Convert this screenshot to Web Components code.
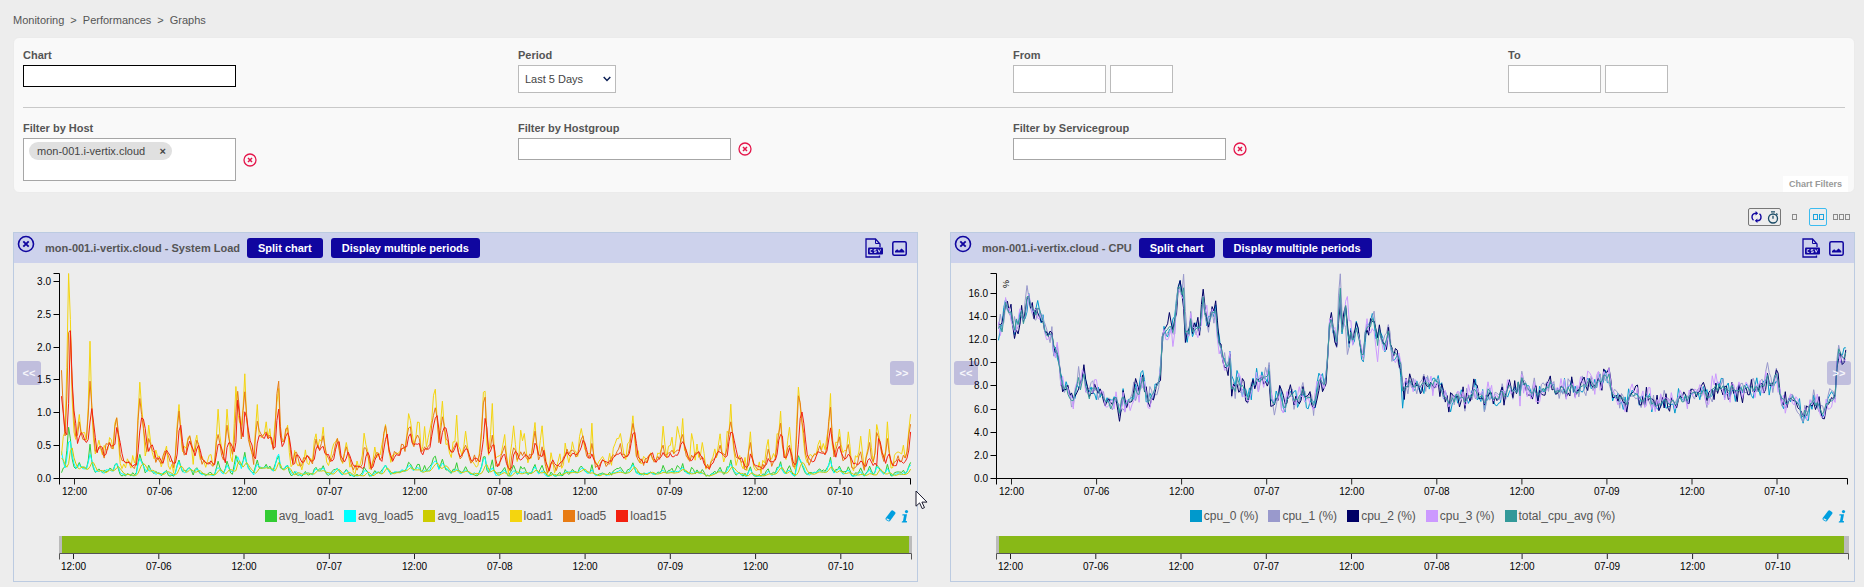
<!DOCTYPE html>
<html lang="en">
<head>
<meta charset="utf-8">
<title>Monitoring - Performances - Graphs</title>
<style>
html, body { margin: 0; background: #ededed; }
body { font: 11px/14px "Liberation Sans", Arial, sans-serif; color: #555; }
</style>
</head>
<body>
<graphs-page></graphs-page>

<script>
const BASE = `<style>
*, *::before { box-sizing: border-box; }
svg { display: block; flex: none; }
button { font: inherit; color: inherit; background: none; border: 0; padding: 0; margin: 0; cursor: pointer; }
input, select { font: inherit; color: #444; margin: 0; border-radius: 0; background: #fff; border: 1px solid #bbb; outline: 0; padding: 0 4px; display: block; }
</style>`;

class Base extends HTMLElement {
  connectedCallback() {
    if (this.shadowRoot) return;
    this.attachShadow({ mode: 'open' }).innerHTML = BASE + this.view();
    this.ready();
  }
  view() { return ''; }
  ready() {}
}

customElements.define('bread-crumb', class extends Base {
  view() {
    const items = this.getAttribute('path').split('/');
    return `<style>
:host { display: block; }
nav { display: flex; gap: 6px; }
a { color: inherit; text-decoration: none; }
</style><nav aria-label="Breadcrumb">${items.map(t => `<a href="#">${t}</a>`).join('<span>&gt;</span>')}</nav>`;
  }
});

/* Labelled filter field: kind is text, group, period, range or host */
customElements.define('filter-field', class extends Base {
  view() {
    const label = this.getAttribute('label');
    const kind = this.getAttribute('kind');
    const clear = `<button class="clear" aria-label="Clear ${label}"><svg width="14" height="14" viewBox="0 0 14 14" fill="none" stroke="#e4164b"><circle cx="7" cy="7" r="6" stroke-width="1.3"/><path d="M5 5l4 4M9 5L5 9" stroke-width="1.5"/></svg></button>`;
    const body = {
      text: `<input class="wide focus" id="f" type="text">`,
      group: `<input class="wide" id="f" type="text">${clear}`,
      period: `<span class="select"><select id="f"><option>Last 5 Days</option></select><svg width="8" height="6" viewBox="0 0 8 6" fill="none" stroke="#0b1f55" stroke-width="1.5"><path d="M.7 1L4 4.4L7.3 1"/></svg></span>`,
      range: `<input class="date" id="f" type="text"><input class="time" type="text" aria-label="${label} time">`,
      host: `<div class="box"><span class="tag">mon-001.i-vertix.cloud<button aria-label="Remove host">×</button></span><input id="f" type="text"></div>${clear}`
    }[kind];
    return `<style>
:host { display: block; }
label { display: block; font-weight: bold; margin-bottom: 3px; }
.row { display: flex; align-items: center; gap: 7px; }
.row.range { gap: 4px; }
.wide { width: 213px; height: 22px; border-color: #a6a6a6; }
.focus { border-color: #000; }
.date { width: 93px; height: 28px; }
.time { width: 63px; height: 28px; }
.select { position: relative; }
.select svg { position: absolute; right: 5px; top: 11px; pointer-events: none; }
select { appearance: none; width: 98px; height: 28px; padding: 0 6px; }
.box { width: 213px; height: 43px; background: #fff; border: 1px solid #a6a6a6; padding: 3px 5px; }
.box input { border: 0; width: 100%; height: 16px; }
.tag { display: flex; width: 143px; justify-content: space-between; background: #e0e0e0; border-radius: 9px; height: 18px; line-height: 18px; padding: 0 6px 0 8px; color: #444; }
.tag button { font-weight: bold; }
</style><label for="f">${label}</label><div class="row ${kind}">${body}</div>`;
  }
});

customElements.define('filter-panel', class extends Base {
  view() {
    return `<style>
:host { display: block; position: relative; background: #f9f9f9; border: 1px solid #ebebeb; border-radius: 6px; padding: 10px 9px 11px; margin-top: 10px; }
.grid { display: grid; grid-template-columns: repeat(4, minmax(0, 1fr)); column-gap: 158px; align-items: start; }
hr { border: 0; height: 1px; background: #c9c9c9; margin: 14px 0 13px; }
.tab { position: absolute; right: 6px; bottom: 0; background: #fff; color: #999; font-size: 9px; font-weight: bold; line-height: 14px; padding: 1px 6px; }
</style>
<div class="grid"><slot name="top"></slot></div><hr>
<div class="grid"><slot name="bottom"></slot></div>
<button class="tab">Chart Filters</button>`;
  }
});

customElements.define('view-toolbar', class extends Base {
  view() {
    const squares = n => `<svg width="${n * 6 - 1}" height="6" viewBox="0 0 ${n * 6 - 1} 6" fill="none" stroke="currentColor">${Array.from({ length: n }, (_, i) => `<rect x="${i * 6 + .5}" y=".5" width="4" height="5"/>`).join('')}</svg>`;
    return `<style>
:host { display: flex; justify-content: flex-end; align-items: center; margin: 15px 5px 6px 0; height: 18px; color: #8a8a8a; }
.refresh { display: flex; align-items: center; gap: 5px; width: 33px; height: 18px; padding: 0 2px; border: 1px solid #777; border-radius: 2px; }
.one { margin: 0 12px 0 11px; }
.two { display: grid; place-items: center; width: 18px; height: 18px; border: 1px solid #3cbcf0; border-radius: 2px; color: #1ba4dd; margin-right: 6px; }
</style>
<span class="refresh">
<button aria-label="Refresh"><svg width="11" height="12" viewBox="0 0 11 12" fill="none" stroke="#10069f" stroke-width="1.4"><path d="M5 2.2C2 2.3 .9 4 1 6.2C1.05 7.6 1.6 8.6 2.5 9.3M6 9.9C9 9.7 10.1 8 10 5.8C9.95 4.4 9.4 3.4 8.5 2.7"/><path d="M4.6 0v4.4L7.2 2.2zM6.4 7.6V12L3.8 9.8z" fill="#10069f" stroke="none"/></svg></button>
<button aria-label="Auto refresh"><svg width="12" height="13" viewBox="0 0 12 13" fill="none" stroke="#1b4c66" stroke-width="1.3"><circle cx="6" cy="7.5" r="4.5"/><path d="M4 .8h4M6 4.8v3M9.3 2.5l1.2 1.2"/></svg></button>
</span>
<button class="one" aria-label="One column">${squares(1)}</button>
<button class="two" aria-label="Two columns">${squares(2)}</button>
<button class="three" aria-label="Three columns">${squares(3)}</button>`;
  }
});

/* ---- series data: pairs of (x, y) on a 3x grid, x from the left axis end ---- */
const LOAD_TREND = `184,508 197,640 204,610 209,320 212,322 218,540 225,570 232,660 240,625 248,632 255,650 266,645 273,538 284,620 292,690 298,660 306,665 315,700 325,650 335,660 342,672 350,605 358,640 366,690 374,715 385,708 395,718 410,722 418,620 426,568 436,610 443,690 452,655 460,668 470,705 478,700 488,712 498,675 508,690 516,712 528,720 537,610 542,605 550,680 558,690 568,645 578,672 586,700 590,670 597,662 606,700 615,715 632,710 645,722 652,665 660,655 668,690 676,710 682,655 692,650 700,680 706,690 712,525 718,570 728,640 734,562 742,590 750,650 758,665 764,720 770,660 778,628 790,640 800,625 806,648 812,620 822,680 828,640 833,505 840,630 846,660 852,655 860,615 870,650 880,730 888,690 896,690 904,715 912,710 922,685 932,708 942,708 950,655 960,680 968,660 976,690 986,690 998,715 1010,655 1016,645 1024,700 1034,715 1042,678 1052,705 1062,722 1075,728 1090,732 1100,675 1106,680 1114,735 1124,705 1133,680 1146,715 1154,650 1160,620 1168,680 1180,715 1186,685 1198,690 1208,665 1218,672 1224,640 1230,620 1238,665 1248,655 1258,650 1266,695 1276,665 1288,675 1298,620 1304,580 1312,570 1320,660 1328,620 1334,595 1344,640 1350,680 1360,678 1370,655 1380,700 1388,685 1400,665 1414,712 1426,700 1440,708 1448,660 1457,553 1465,690 1472,680 1481,650 1490,725 1500,715 1512,680 1520,715 1532,738 1543,675 1548,675 1560,710 1570,695 1580,690 1588,700 1598,690 1606,645 1616,690 1624,700 1630,675 1640,720 1648,738 1656,705 1672,725 1688,710 1702,680 1712,695 1720,680 1730,695 1742,665 1750,645 1758,670 1767,712 1776,685 1786,715 1797,735 1808,700 1824,715 1838,700 1848,690 1862,680 1870,695 1886,690 1894,650 1900,620 1906,630 1914,695 1924,710 1938,715 1950,690 1957,680 1966,715 1978,700 1988,680 1998,700 2010,685 2020,695 2032,690 2040,670 2046,645 2054,665 2062,695 2074,712 2084,690 2098,680 2110,710 2124,730 2138,715 2152,685 2164,678 2170,695 2180,700 2190,620 2198,625 2206,670 2216,705 2226,695 2236,725 2244,725 2251,680 2260,715 2276,725 2292,728 2306,700 2318,715 2330,695 2338,630 2346,625 2352,700 2360,700 2370,665 2378,715 2392,715 2398,600 2403,545 2412,600 2420,690 2430,710 2442,705 2456,675 2470,685 2478,690 2485,650 2490,600 2496,650 2506,695 2518,660 2528,695 2538,705 2546,680 2558,715 2570,720 2582,705 2596,730 2606,695 2616,715 2630,720 2634,640 2640,650 2648,690 2658,720 2664,680 2674,710 2684,728 2696,700 2710,715 2724,690 2732,617`;
/* x, load1 peak, load5 peak */
const LOAD_PEAKS = `184,690,435 212,318,312 206,145,322 239,568,590 272,348,468 297,645,670 350,578,578 418,471,520 446,600,640 536,538,558 568,632,632 592,630,645 653,552,628 680,552,600 713,580,472 708,484,560 734,446,500 770,538,588 797,590,620 833,490,468 860,600,608 948,626,642 968,606,632 1010,640,640 1040,652,665 1094,624,668 1155,598,602 1224,560,610 1232,586,605 1250,590,625 1258,592,640 1274,604,665 1298,515,580 1306,492,548 1328,528,575 1370,570,650 1395,618,660 1450,502,540 1457,498,516 1478,535,630 1511,628,662 1542,602,668 1562,615,680 1574,625,680 1604,592,618 1626,602,665 1718,650,675 1742,594,645 1748,640,632 1775,594,655 1850,640,680 1860,625,655 1898,572,595 1988,603,660 2016,636,675 2030,604,675 2046,580,628 2072,625,690 2104,652,695 2160,626,660 2190,537,590 2250,620,652 2304,643,672 2340,558,594 2368,606,660 2397,486,512 2458,645,662 2470,655,680 2490,505,546 2519,612,635 2546,620,658 2582,633,680 2606,612,652 2630,598,622 2664,590,640 2710,660,690 2729,567,597`;
const CPU_TREND = `175,300 185,320 196,245 204,265 214,265 222,320 230,280 236,305 244,255 252,320 262,200 270,235 284,270 294,255 302,265 310,285 320,345 332,320 342,360 352,380 360,440 370,500 378,490 386,525 396,540 406,500 416,465 422,500 430,455 440,490 448,525 456,480 466,480 476,510 486,520 496,530 504,515 512,550 524,515 538,560 546,520 556,540 564,525 574,520 586,500 596,505 606,465 614,495 624,525 634,500 644,495 654,470 661,440 665,325 674,320 684,315 692,310 702,300 712,200 718,185 724,210 731,195 734,320 746,325 752,270 758,330 768,305 780,310 788,225 796,285 806,305 814,255 818,290 824,250 832,320 842,350 850,410 862,420 868,395 874,480 884,500 892,460 900,495 910,495 918,510 926,525 934,480 946,470 954,470 966,460 974,445 980,470 986,440 990,515 1004,535 1016,505 1032,545 1048,505 1060,520 1072,520 1088,500 1100,510 1118,535 1130,500 1140,465 1150,480 1160,440 1166,310 1172,295 1180,300 1188,355 1194,280 1199,180 1204,320 1212,280 1219,230 1223,370 1230,315 1240,350 1250,315 1262,370 1268,390 1278,300 1288,310 1298,280 1306,300 1310,370 1316,300 1326,365 1336,345 1346,325 1354,385 1364,385 1374,385 1384,420 1389,500 1398,480 1410,470 1420,485 1440,475 1455,465 1470,485 1485,455 1500,485 1510,515 1530,535 1550,515 1565,510 1580,530 1600,500 1620,510 1635,525 1650,495 1665,525 1680,505 1695,510 1710,485 1725,505 1735,475 1740,525 1746,465 1760,485 1775,505 1790,495 1800,505 1815,495 1830,475 1845,500 1860,490 1875,500 1895,485 1910,495 1925,490 1940,470 1950,465 1960,485 1975,475 1990,455 2005,450 2015,510 2030,505 2045,520 2060,530 2075,510 2092,515 2105,525 2122,515 2140,535 2160,530 2180,535 2200,530 2220,525 2240,515 2250,520 2260,495 2275,515 2290,495 2305,520 2320,495 2335,485 2350,485 2365,500 2380,485 2395,500 2410,490 2425,495 2440,485 2455,500 2470,485 2483,470 2490,485 2510,450 2520,500 2530,525 2540,545 2555,525 2573,525 2585,570 2595,565 2608,545 2625,530 2638,555 2650,565 2660,535 2670,525 2683,535 2690,425 2697,370 2705,395 2715,390 2722,420`;
/* x, height, index of the series that spikes */
const CPU_PEAKS = `196,222,0 222,340,2 262,181,1 292,226,0 416,424,1 430,434,0 538,572,1 586,460,2 606,436,0 628,550,3 685,262,2 697,364,3 718,166,2 731,147,1 734,352,2 788,192,2 800,240,3 824,227,2 836,386,3 868,378,0 892,436,0 905,460,2 986,412,1 1118,550,2 1138,444,0 1171,262,2 1188,364,2 1199,146,1 1219,214,3 1223,388,1 1250,292,2 1268,410,0 1298,265,0 1310,410,3 1389,549,0 1408,446,2 1532,560,0 1642,470,3 1670,542,0 1746,438,1 1948,442,3 2006,428,2 2318,452,3 2484,412,1 2510,434,2 2586,582,1 2597,584,0 2650,580,2 2668,490,1 2697,360,1 2718,368,0`;

const parse = s => s.split(' ').map(p => p.split(',').map(Number));
const random = seed => () => (seed = (seed * 16807) % 2147483647) / 2147483647;
const at = (pts, x) => {
  if (x <= pts[0][0]) return pts[0][1];
  for (let i = 1; i < pts.length; i++) if (x <= pts[i][0]) {
    const [a, b] = [pts[i - 1], pts[i]];
    return a[1] + (b[1] - a[1]) * (x - a[0]) / (b[0] - a[0]);
  }
  return pts[pts.length - 1][1];
};
const STEP = 5.34;
const grid = (from, to) => Array.from({ length: Math.floor((to - from) / STEP) + 1 }, (_, i) => from + i * STEP);
const put = (values, from, x, y, near) => {
  const i = Math.round((x - from) / STEP);
  if (i < 0 || i >= values.length) return;
  values[i] = y;
  for (const j of [i - 1, i + 1]) if (j >= 0 && j < values.length) values[j] += (y - values[j]) * near;
};

function loadSeries() {
  const trend = parse(LOAD_TREND), rnd = random(77), xs = grid(184, 2732);
  const l15 = xs.map(x => 760 - at(trend, x) + (rnd() - .5) * 10);
  const l5 = xs.map(x => Math.max(12, (760 - at(trend, x + 4)) + (rnd() - .5) * 24));
  const l1 = xs.map(x => Math.max(14, (760 - at(trend, x + 6)) * .96 + (rnd() - .42) * 54));
  for (const [x, a, b] of parse(LOAD_PEAKS)) {
    put(l1, 184, x, 760 - a, a > 600 ? .35 : .2);
    put(l5, 184, x, 760 - b, .3);
  }
  const quarter = v => v.map(n => Math.max(7, n / 4));
  const slow = quarter(l15).map((v, i, all) => (v + (all[i - 1] ?? v)) / 2);
  return { from: 184, axis: 178, list: [quarter(l1), quarter(l5), slow, l1, l5, l15] };
}
function cpuSeries() {
  const trend = parse(CPU_TREND), rnd = random(4242), xs = grid(175, 2722);
  const avg = xs.map(x => 760 - at(trend, x) + (rnd() - .5) * 22);
  const list = [0, 1, 2, 3].map(() => avg.map(v => v + (rnd() + rnd() - 1) * 38));
  for (const [x, y, n] of parse(CPU_PEAKS)) {
    put(list[n], 175, x, 760 - y, .35);
    const i = Math.round((x - 175) / STEP);
    if (avg[i]) avg[i] += (760 - y - avg[i]) * .3;
  }
  return { from: 175, axis: 169, list: [...list, avg] };
}

const CHARTS = {
  load: {
    make: loadSeries, unit: 65.67, ticks: ['0.0', '0.5', '1.0', '1.5', '2.0', '2.5', '3.0'],
    series: [['avg_load1', '#33cc33'], ['avg_load5', '#00ffff'], ['avg_load15', '#cccc00'], ['load1', '#f4d50f'], ['load5', '#e87c14'], ['load15', '#f32010']]
  },
  cpu: {
    make: cpuSeries, unit: 11.573, ticks: ['0.0', '2.0', '4.0', '6.0', '8.0', '10.0', '12.0', '14.0', '16.0'], mark: '%',
    series: [['cpu_0 (%)', '#0099cc'], ['cpu_1 (%)', '#9999cc'], ['cpu_2 (%)', '#000066'], ['cpu_3 (%)', '#cc99ff'], ['total_cpu_avg (%)', '#339999']]
  }
};
const DAYS = ['12:00', '07-06', '12:00', '07-07', '12:00', '07-08', '12:00', '07-09', '12:00', '07-10'];

customElements.define('time-plot', class extends Base {
  view() {
    return `<style>
:host { display: block; }
svg { width: 100%; height: 240px; font-size: 10px; }
text { fill: #000; }
</style><svg role="img" aria-label="Time series"></svg>`;
  }
  ready() {
    this.data = CHARTS[this.getAttribute('kind')];
    this.values = this.data.make();
    new ResizeObserver(() => this.draw()).observe(this);
    this.draw();
  }
  draw() {
    const { data, values } = this, left = 45.5, right = this.clientWidth - 6.5, base = 215.5;
    const span = right - left, scale = span / 851 / 3;
    const lines = values.list.map((v, n) => `<polyline fill="none" stroke="${data.series[n][1]}" points="${v.map((y, i) => `${(left + (values.from - values.axis + i * STEP) * scale).toFixed(1)},${(base - Math.max(5, Math.min(y, 615)) / 3).toFixed(1)}`).join(' ')}"/>`).join('');
    const ys = data.ticks.map(t => {
      const y = Math.round(base - t * data.unit - .5) + .5;
      return `<path d="M${left} ${y}h-6" stroke="#000"/><text x="${left - 8.5}" y="${y + 3.5}" text-anchor="end">${t}</text>`;
    }).join('');
    const xs = DAYS.map((t, i) => {
      const x = left + (15 + i * 85.06) * span / 851;
      return `<path d="M${x.toFixed(1)} ${base}v6" stroke="#222"/><text x="${x.toFixed(1)}" y="232" text-anchor="middle">${t}</text>`;
    }).join('');
    this.shadowRoot.querySelector('svg').innerHTML = `${lines}
<path d="M${left - 6} 10.5H${left}V${base}M${left} ${base + 6}V${base}H${right}v6" fill="none" stroke="#000"/>${ys}${xs}
${data.mark ? `<text transform="translate(58 23) rotate(-90)" font-size="9" text-anchor="end" dx="6">${data.mark}</text>` : ''}`;
  }
});

customElements.define('time-brush', class extends Base {
  view() {
    return `<style>
:host { display: block; }
svg { width: 100%; height: 52px; font-size: 10px; }
text { fill: #000; }
</style><svg role="img" aria-label="Visible period"></svg>`;
  }
  ready() {
    new ResizeObserver(() => this.draw()).observe(this);
    this.draw();
  }
  draw() {
    const left = 45, right = this.clientWidth - 5, span = right - left;
    const end = this.getAttribute('kind') === 'cpu' ? 5 : 3;
    this.shadowRoot.querySelector('svg').innerHTML = `<rect x="${left}" y="7" width="${span}" height="17" fill="#bbb"/>
<rect x="${left + 3}" y="7" width="${span - 3 - end}" height="17" fill="#88b917"/>
<path d="M${left + .5} 30.5V24.5H${right - .5}v6" fill="none" stroke="#555"/>` + DAYS.map((t, i) => {
      const x = (left + (14.5 + i * 85.26) * span / 853).toFixed(1);
      return `<path d="M${x} 25v5" stroke="#222"/><text x="${x}" y="41" text-anchor="middle">${t}</text>`;
    }).join('');
  }
});

customElements.define('chart-card', class extends Base {
  view() {
    const kind = this.getAttribute('kind');
    const legend = CHARTS[kind].series.map(([name, color]) => `<li><i style="background:${color}"></i>${name}</li>`).join('');
    return `<style>
:host { display: block; position: relative; border: 1px solid #bccbe1; min-width: 0; }
header { display: flex; align-items: center; height: 30px; background: #cdd2ec; padding: 0 10px 0 3px; }
.close { align-self: flex-start; margin-top: 2px; }
h2 { font-size: 11px; line-height: 14px; margin: 0 7px 0 10px; }
.action { background: #10069f; color: #fff; font-weight: bold; border-radius: 3px; height: 20px; padding: 0 11px; line-height: 20px; margin-right: 8px; white-space: nowrap; }
.tools { display: flex; align-items: center; gap: 9px; margin-left: auto; }
.nav { position: absolute; top: 128px; width: 24px; height: 24px; border-radius: 3px; background: rgba(16, 6, 159, .2); color: #f6f6fb; font-weight: bold; }
.prev { left: 3px; }
.next { right: 3px; }
.legend { position: relative; display: flex; justify-content: center; align-items: center; height: 26px; }
ul { display: flex; gap: 10px; list-style: none; margin: 0; padding: 0; font-size: 12px; }
li { display: flex; align-items: center; gap: 2px; white-space: nowrap; }
li i { width: 12px; height: 12px; }
.links { position: absolute; right: 8px; top: 7px; display: flex; gap: 5px; }
</style>
<header>
<button class="close" aria-label="Close chart"><svg width="18" height="18" viewBox="0 0 18 18" fill="none" stroke="#10069f"><circle cx="9" cy="9" r="7.5" stroke-width="1.6"/><path d="M6.3 6.3l5.4 5.4M11.7 6.3l-5.4 5.4" stroke-width="1.9"/></svg></button>
<h2><slot></slot></h2>
<button class="action">Split chart</button><button class="action">Display multiple periods</button>
<span class="tools">
<button aria-label="Export CSV"><svg width="18" height="20" viewBox="0 0 18 20" fill="none" stroke="#10069f"><path d="M14.5 17.5v1.500H1V1h9.500L15 6v3" stroke-width="1.3"/><path d="M10.5 1v4.500H15"/><rect x="3" y="9.500" width="15" height="7" rx="1" fill="#10069f" stroke="none"/><path d="M7.3 11.6H5.200v2.800h2.100M11.300 11.600H9.200v1.400h2v1.400H9M13 11.300l1.200 3 1.300-3" stroke="#dfe2f5" stroke-width=".9"/></svg></button>
<button aria-label="Export image"><svg width="15" height="15" viewBox="0 0 15 15"><rect x=".8" y=".8" width="13.400" height="13.400" rx="1.500" fill="none" stroke="#10069f" stroke-width="1.5"/><path d="M3 11.500V10L5.200 8.200l1.800 1.600L9.600 7.500l2.700 2.500v1.500z" fill="#10069f"/></svg></button>
</span>
</header>
<time-plot kind="${kind}"></time-plot>
<div class="legend"><ul>${legend}</ul>
<span class="links">
<a href="#" aria-label="Clear curve"><svg width="11" height="12" viewBox="0 0 11 12"><path d="M6.200.8Q7 0 7.900.5L10 2Q10.900 2.700 10.300 3.700L5.200 10.800Q4.400 11.800 3.300 11.300L1 9.900Q.1 9.200.7 8.100z" fill="#009fdf"/><path d="M1.600 8.700l2.700 1.600" stroke="#ededed" stroke-width="1.3"/></svg></a>
<a href="#" aria-label="Information"><svg width="8" height="13" viewBox="0 0 8 13" fill="#009fdf"><circle cx="5.500" cy="1.600" r="1.600"/><path d="M1.500 4.200H6L4.700 11H6l-.2 1.600H.7L.9 11.500l1.100-.4L3 5.500H1.300z"/></svg></a>
</span></div>
<time-brush kind="${kind}"></time-brush>
<button class="nav prev">&lt;&lt;</button><button class="nav next">&gt;&gt;</button>
<slot name="overlay"></slot>`;
  }
});

customElements.define('mouse-pointer', class extends Base {
  view() {
    return `<style>
:host { display: block; position: absolute; top: 257px; right: -11px; pointer-events: none; }
</style><svg width="13" height="20" viewBox="0 0 13 20"><path d="M1 1v15.200l3.600-3.300 2.600 5.700 2.300-1-2.600-5.500H12z" fill="#fff" stroke="#1a1a2e"/></svg>`;
  }
});

customElements.define('graphs-page', class extends Base {
  view() {
    return `<style>
:host { display: block; padding: 13px 9px 4px 13px; }
.charts { display: grid; grid-template-columns: repeat(2, minmax(0, 1fr)); gap: 32px; }
</style>
<bread-crumb path="Monitoring/Performances/Graphs"></bread-crumb>
<filter-panel>
<filter-field slot="top" label="Chart" kind="text"></filter-field>
<filter-field slot="top" label="Period" kind="period"></filter-field>
<filter-field slot="top" label="From" kind="range"></filter-field>
<filter-field slot="top" label="To" kind="range"></filter-field>
<filter-field slot="bottom" label="Filter by Host" kind="host"></filter-field>
<filter-field slot="bottom" label="Filter by Hostgroup" kind="group"></filter-field>
<filter-field slot="bottom" label="Filter by Servicegroup" kind="group"></filter-field>
</filter-panel>
<view-toolbar></view-toolbar>
<div class="charts">
<chart-card kind="load">mon-001.i-vertix.cloud - System Load<mouse-pointer slot="overlay"></mouse-pointer></chart-card>
<chart-card kind="cpu">mon-001.i-vertix.cloud - CPU</chart-card>
</div>`;
  }
});
</script>
</body>
</html>
